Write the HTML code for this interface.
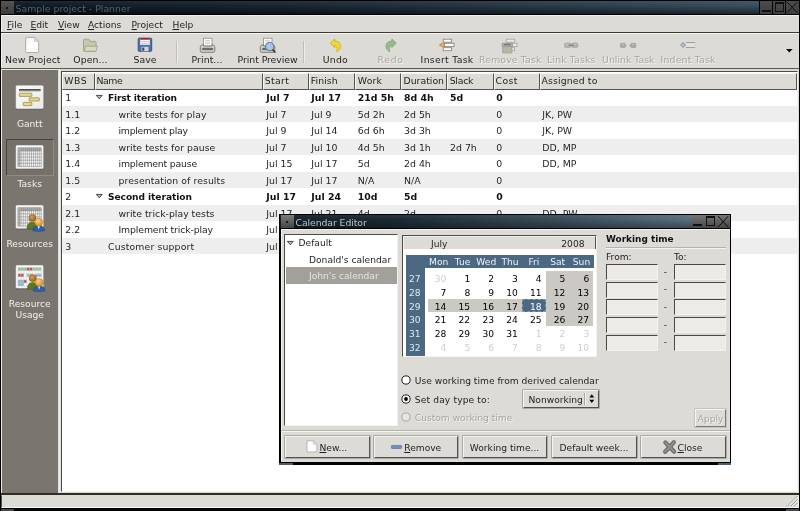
<!DOCTYPE html><html><head><meta charset="utf-8"><title>Sample project - Planner</title><style>
html,body{margin:0;padding:0;background:#000;}
body{width:800px;height:511px;overflow:hidden;background:#000;position:relative;font-family:"DejaVu Sans","Liberation Sans",sans-serif;font-size:9.15px;color:#1f1f1f;}
div{position:absolute;box-sizing:border-box;}
svg{position:absolute;overflow:visible;}
.t{white-space:nowrap;line-height:12px;}
.dis{color:#a9a7a2;text-shadow:0.8px 0.8px 0 #f4f3f0;}
.b{font-weight:bold;color:#111;}
u{text-decoration:underline;text-underline-offset:1px;text-decoration-thickness:0.75px;}
.btn{background:#dddbd6;border:1px solid;border-color:#f6f5f3 #55534e #55534e #f6f5f3;box-shadow:0 0 0 0.6px #8a8883;}
.entry{background:#edebe7;border:1.3px solid;border-color:#4a4843 #f3f2ef #f3f2ef #4a4843;}
</style></head><body><div id="root" style="left:0;top:0;width:800px;height:511px;overflow:hidden;will-change:transform;filter:blur(0.38px);">
<div style="left:0px;top:0px;width:800px;height:511px;background:#dddbd6;"></div>
<div style="left:0px;top:0px;width:800px;height:15px;background:#000;"></div>
<div style="left:1px;top:1px;width:798px;height:13px;background:linear-gradient(to bottom,rgba(255,255,255,0.06) 0%,rgba(0,0,0,0) 35%,rgba(0,0,0,0.5) 100%),linear-gradient(to right,#0f1922 0%,#182631 35%,#2c414f 75%,#3d5362 100%);"></div>
<div style="left:1px;top:1px;width:12.5px;height:13px;background:linear-gradient(to bottom,#555,#3c3c3c);"></div>
<div style="left:6.2px;top:6.7px;width:2px;height:2px;background:#000;border-radius:1px;"></div>
<div class="t" style="left:15.6px;top:2.58px;font-size:9.3px;color:#54646f;"><span style="letter-spacing:0.014px;">Sample project - Planner</span></div>
<div style="left:759.4px;top:0px;width:40px;height:15px;background:#000;"></div>
<div style="left:760.0px;top:1px;width:12.4px;height:13px;background:linear-gradient(to bottom,#4c4c4c,#3e3e3e);"></div>
<div style="left:773.1px;top:1px;width:12.4px;height:13px;background:linear-gradient(to bottom,#4c4c4c,#3e3e3e);"></div>
<div style="left:786.2px;top:1px;width:12.4px;height:13px;background:linear-gradient(to bottom,#4c4c4c,#3e3e3e);"></div>
<div style="left:761.8px;top:9.8px;width:9px;height:2.2px;border:0.9px solid #111;background:#2f2f2f;"></div>
<div style="left:774.5px;top:2.2px;width:9.6px;height:9.8px;border:1px solid #111;border-top:2px solid #111;"></div>
<svg style="left:786.2px;top:1px" width="12.4" height="13"><path d="M1.2 1.2 L11.2 11.6 M11.2 1.2 L1.2 11.6" stroke="#0c0c0c" stroke-width="1" fill="none"/></svg>
<div style="left:0px;top:0px;width:1px;height:511px;background:#000;"></div>
<div style="left:799px;top:0px;width:1px;height:511px;background:#000;"></div>
<div style="left:1px;top:15px;width:798px;height:17px;background:#dddbd6;border-top:1px solid #f3f2ef;border-left:1px solid #f3f2ef;"></div>
<div style="left:1px;top:32px;width:798px;height:1px;background:#3c3a36;"></div>
<div class="t" style="left:7px;top:18.93px;font-size:9.15px;"><u>F</u>ile</div>
<div class="t" style="left:30.5px;top:18.93px;font-size:9.15px;"><u>E</u>dit</div>
<div class="t" style="left:58px;top:18.93px;font-size:9.15px;"><u>V</u>iew</div>
<div class="t" style="left:88px;top:18.93px;font-size:9.15px;"><u>A</u>ctions</div>
<div class="t" style="left:131.5px;top:18.93px;font-size:9.15px;"><u>P</u>roject</div>
<div class="t" style="left:172.5px;top:18.93px;font-size:9.15px;"><u>H</u>elp</div>
<div style="left:1px;top:33px;width:798px;height:35px;background:#dddbd6;border-top:1px solid #f6f5f2;border-left:1px solid #f3f2ef;"></div>
<div style="left:1px;top:68px;width:798px;height:1px;background:#5a5853;"></div>
<div class="t" style="left:5.1px;top:53.58px;font-size:9.3px;"><span style="letter-spacing:0.032px;">New Project</span></div>
<div class="t" style="left:73.35px;top:53.58px;font-size:9.3px;"><span style="letter-spacing:0.064px;">Open...</span></div>
<div class="t" style="left:133.6px;top:53.58px;font-size:9.3px;"><span style="letter-spacing:0.018px;">Save</span></div>
<div class="t" style="left:191.6px;top:53.58px;font-size:9.3px;"><span style="letter-spacing:0.079px;">Print...</span></div>
<div class="t" style="left:237.6px;top:53.58px;font-size:9.3px;"><span style="letter-spacing:-0.049px;">Print Preview</span></div>
<div class="t" style="left:322.85px;top:53.58px;font-size:9.3px;"><span style="letter-spacing:0.213px;">Undo</span></div>
<div class="t dis" style="left:377.6px;top:53.58px;font-size:9.3px;"><span style="letter-spacing:0.635px;">Redo</span></div>
<div class="t" style="left:420.6px;top:53.58px;font-size:9.3px;"><span style="letter-spacing:0.292px;">Insert Task</span></div>
<div class="t dis" style="left:479.1px;top:53.58px;font-size:9.3px;"><span style="letter-spacing:0.150px;">Remove Task</span></div>
<div class="t dis" style="left:547.1px;top:53.58px;font-size:9.3px;"><span style="letter-spacing:0.149px;">Link Tasks</span></div>
<div class="t dis" style="left:602.1px;top:53.58px;font-size:9.3px;"><span style="letter-spacing:0.021px;">Unlink Task</span></div>
<div class="t dis" style="left:660.6px;top:53.58px;font-size:9.3px;"><span style="letter-spacing:0.190px;">Indent Task</span></div>
<div style="left:175.6px;top:40.5px;width:1px;height:22px;background:#c0beb9;"></div>
<div style="left:176.6px;top:40.5px;width:1px;height:22px;background:#eeedea;"></div>
<div style="left:303.4px;top:40.5px;width:1px;height:22px;background:#c0beb9;"></div>
<div style="left:304.4px;top:40.5px;width:1px;height:22px;background:#eeedea;"></div>
<svg style="left:786px;top:48.5px" width="7" height="4"><path d="M0 0 L6.6 0 L3.3 3.6 Z" fill="#000"/></svg>
<div style="left:1px;top:69px;width:1.2px;height:424px;background:#e9e8e4;"></div>
<div style="left:2px;top:69px;width:57px;height:1.4px;background:#e6e4e0;"></div>
<div style="left:2.2px;top:70.3px;width:56.3px;height:422.3px;background:#7a766f;"></div>
<div style="left:58.5px;top:69.3px;width:1px;height:423.3px;background:#f1f0ed;"></div>
<div style="left:5.9px;top:138.7px;width:48.2px;height:37.6px;background:#75716a;border:1.2px solid;border-color:#45433f #908c85 #908c85 #45433f;"></div>
<div class="t" style="left:-70.3px;width:200px;text-align:center;top:118.33px;font-size:9.15px;color:#f2f1ee;">Gantt</div>
<div class="t" style="left:-70.3px;width:200px;text-align:center;top:178.03px;font-size:9.15px;color:#f2f1ee;">Tasks</div>
<div class="t" style="left:-70.3px;width:200px;text-align:center;top:237.53px;font-size:9.15px;color:#f2f1ee;">Resources</div>
<div class="t" style="left:-70.3px;width:200px;text-align:center;top:297.93px;font-size:9.15px;color:#f2f1ee;">Resource</div>
<div class="t" style="left:-70.3px;width:200px;text-align:center;top:308.93px;font-size:9.15px;color:#f2f1ee;">Usage</div>
<div style="left:61px;top:70.8px;width:737.3px;height:421.7px;background:#fff;border:1px solid;border-color:#4d4b46 #f3f2ef #f3f2ef #4d4b46;"></div>
<div style="left:62px;top:72.5px;width:735px;height:17.3px;background:#dddbd6;border-bottom:1px solid #55534e;"></div>
<div style="left:62px;top:72.5px;width:32.8px;height:17.2px;background:#dddbd6;border:1px solid;border-color:#f6f5f2 #55534e #55534e #f6f5f2;"></div>
<div class="t" style="left:64.3px;top:75.38px;font-size:9.3px;"><span style="letter-spacing:0.562px;">WBS</span></div>
<div style="left:94.8px;top:72.5px;width:168.2px;height:17.2px;background:#dddbd6;border:1px solid;border-color:#f6f5f2 #55534e #55534e #f6f5f2;"></div>
<div class="t" style="left:96.4px;top:75.38px;font-size:9.3px;"><span style="letter-spacing:-0.384px;">Name</span></div>
<div style="left:263px;top:72.5px;width:45.80000000000001px;height:17.2px;background:#dddbd6;border:1px solid;border-color:#f6f5f2 #55534e #55534e #f6f5f2;"></div>
<div class="t" style="left:264.8px;top:75.38px;font-size:9.3px;"><span style="letter-spacing:0.356px;">Start</span></div>
<div style="left:308.8px;top:72.5px;width:46.0px;height:17.2px;background:#dddbd6;border:1px solid;border-color:#f6f5f2 #55534e #55534e #f6f5f2;"></div>
<div class="t" style="left:310.8px;top:75.38px;font-size:9.3px;"><span style="letter-spacing:0.072px;">Finish</span></div>
<div style="left:354.8px;top:72.5px;width:46.39999999999998px;height:17.2px;background:#dddbd6;border:1px solid;border-color:#f6f5f2 #55534e #55534e #f6f5f2;"></div>
<div class="t" style="left:357.8px;top:75.38px;font-size:9.3px;"><span style="letter-spacing:0.188px;">Work</span></div>
<div style="left:401.2px;top:72.5px;width:45.60000000000002px;height:17.2px;background:#dddbd6;border:1px solid;border-color:#f6f5f2 #55534e #55534e #f6f5f2;"></div>
<div class="t" style="left:403.5px;top:75.38px;font-size:9.3px;"><span style="letter-spacing:0.014px;">Duration</span></div>
<div style="left:446.8px;top:72.5px;width:46.80000000000001px;height:17.2px;background:#dddbd6;border:1px solid;border-color:#f6f5f2 #55534e #55534e #f6f5f2;"></div>
<div class="t" style="left:449.7px;top:75.38px;font-size:9.3px;"><span style="letter-spacing:-0.237px;">Slack</span></div>
<div style="left:493.6px;top:72.5px;width:46.0px;height:17.2px;background:#dddbd6;border:1px solid;border-color:#f6f5f2 #55534e #55534e #f6f5f2;"></div>
<div class="t" style="left:495.6px;top:75.38px;font-size:9.3px;"><span style="letter-spacing:0.357px;">Cost</span></div>
<div style="left:539.6px;top:72.5px;width:257.4px;height:17.2px;background:#dddbd6;border:1px solid;border-color:#f6f5f2 #55534e #55534e #f6f5f2;"></div>
<div class="t" style="left:541.6px;top:75.38px;font-size:9.3px;"><span style="letter-spacing:0.141px;">Assigned to</span></div>
<div class="t" style="left:65.3px;top:92.15px;font-size:9.4px;">1</div>
<div class="t b" style="left:108px;top:92.25px;font-size:9.1px;"><span style="letter-spacing:-0.152px;">First iteration</span></div>
<svg style="left:96px;top:95.35px" width="7" height="5"><path d="M0.4 0.4 L6.2 0.4 L3.3 3.8 Z" fill="#c4c4c4" stroke="#333" stroke-width="0.9"/></svg>
<div class="t b" style="left:266.3px;top:92.16px;font-size:9.35px;">Jul 7</div>
<div class="t b" style="left:311.3px;top:92.16px;font-size:9.35px;">Jul 17</div>
<div class="t b" style="left:357.8px;top:92.16px;font-size:9.35px;">21d 5h</div>
<div class="t b" style="left:404px;top:92.16px;font-size:9.35px;">8d 4h</div>
<div class="t b" style="left:450px;top:92.16px;font-size:9.35px;">5d</div>
<div class="t b" style="left:496.3px;top:92.16px;font-size:9.35px;">0</div>
<div style="left:62px;top:106.0px;width:735.5px;height:16.45px;background:#eeeeee;"></div>
<div class="t" style="left:65.3px;top:108.67px;font-size:9.4px;">1.1</div>
<div class="t" style="left:118.5px;top:108.70px;font-size:9.3px;"><span style="letter-spacing:0.025px;">write tests for play</span></div>
<div class="t" style="left:266.3px;top:108.67px;font-size:9.4px;">Jul 7</div>
<div class="t" style="left:311.3px;top:108.67px;font-size:9.4px;">Jul 9</div>
<div class="t" style="left:357.8px;top:108.67px;font-size:9.4px;">5d 2h</div>
<div class="t" style="left:404px;top:108.67px;font-size:9.4px;">2d 5h</div>
<div class="t" style="left:496.3px;top:108.67px;font-size:9.4px;">0</div>
<div class="t" style="left:542.3px;top:108.67px;font-size:9.4px;">JK, PW</div>
<div class="t" style="left:65.3px;top:125.19px;font-size:9.4px;">1.2</div>
<div class="t" style="left:118.5px;top:125.22px;font-size:9.3px;"><span style="letter-spacing:-0.250px;">implement play</span></div>
<div class="t" style="left:266.3px;top:125.19px;font-size:9.4px;">Jul 9</div>
<div class="t" style="left:311.3px;top:125.19px;font-size:9.4px;">Jul 14</div>
<div class="t" style="left:357.8px;top:125.19px;font-size:9.4px;">6d 6h</div>
<div class="t" style="left:404px;top:125.19px;font-size:9.4px;">3d 3h</div>
<div class="t" style="left:496.3px;top:125.19px;font-size:9.4px;">0</div>
<div class="t" style="left:542.3px;top:125.19px;font-size:9.4px;">JK, PW</div>
<div style="left:62px;top:138.89999999999998px;width:735.5px;height:16.45px;background:#eeeeee;"></div>
<div class="t" style="left:65.3px;top:141.71px;font-size:9.4px;">1.3</div>
<div class="t" style="left:118.5px;top:141.74px;font-size:9.3px;"><span style="letter-spacing:0.053px;">write tests for pause</span></div>
<div class="t" style="left:266.3px;top:141.71px;font-size:9.4px;">Jul 7</div>
<div class="t" style="left:311.3px;top:141.71px;font-size:9.4px;">Jul 10</div>
<div class="t" style="left:357.8px;top:141.71px;font-size:9.4px;">4d 5h</div>
<div class="t" style="left:404px;top:141.71px;font-size:9.4px;">3d 1h</div>
<div class="t" style="left:450px;top:141.71px;font-size:9.4px;">2d 7h</div>
<div class="t" style="left:496.3px;top:141.71px;font-size:9.4px;">0</div>
<div class="t" style="left:542.3px;top:141.71px;font-size:9.4px;">DD, MP</div>
<div class="t" style="left:65.3px;top:158.23px;font-size:9.4px;">1.4</div>
<div class="t" style="left:118.5px;top:158.26px;font-size:9.3px;"><span style="letter-spacing:-0.178px;">implement pause</span></div>
<div class="t" style="left:266.3px;top:158.23px;font-size:9.4px;">Jul 15</div>
<div class="t" style="left:311.3px;top:158.23px;font-size:9.4px;">Jul 17</div>
<div class="t" style="left:357.8px;top:158.23px;font-size:9.4px;">5d</div>
<div class="t" style="left:404px;top:158.23px;font-size:9.4px;">2d 4h</div>
<div class="t" style="left:496.3px;top:158.23px;font-size:9.4px;">0</div>
<div class="t" style="left:542.3px;top:158.23px;font-size:9.4px;">DD, MP</div>
<div style="left:62px;top:171.8px;width:735.5px;height:16.45px;background:#eeeeee;"></div>
<div class="t" style="left:65.3px;top:174.75px;font-size:9.4px;">1.5</div>
<div class="t" style="left:118.5px;top:174.78px;font-size:9.3px;"><span style="letter-spacing:0.079px;">presentation of results</span></div>
<div class="t" style="left:266.3px;top:174.75px;font-size:9.4px;">Jul 17</div>
<div class="t" style="left:311.3px;top:174.75px;font-size:9.4px;">Jul 17</div>
<div class="t" style="left:357.8px;top:174.75px;font-size:9.4px;">N/A</div>
<div class="t" style="left:404px;top:174.75px;font-size:9.4px;">N/A</div>
<div class="t" style="left:496.3px;top:174.75px;font-size:9.4px;">0</div>
<div class="t" style="left:65.3px;top:191.27px;font-size:9.4px;">2</div>
<div class="t b" style="left:108px;top:191.37px;font-size:9.1px;"><span style="letter-spacing:-0.066px;">Second iteration</span></div>
<svg style="left:96px;top:194.05px" width="7" height="5"><path d="M0.4 0.4 L6.2 0.4 L3.3 3.8 Z" fill="#c4c4c4" stroke="#333" stroke-width="0.9"/></svg>
<div class="t b" style="left:266.3px;top:191.28px;font-size:9.35px;">Jul 17</div>
<div class="t b" style="left:311.3px;top:191.28px;font-size:9.35px;">Jul 24</div>
<div class="t b" style="left:357.8px;top:191.28px;font-size:9.35px;">10d</div>
<div class="t b" style="left:404px;top:191.28px;font-size:9.35px;">5d</div>
<div class="t b" style="left:496.3px;top:191.28px;font-size:9.35px;">0</div>
<div style="left:62px;top:204.7px;width:735.5px;height:16.45px;background:#eeeeee;"></div>
<div class="t" style="left:65.3px;top:207.79px;font-size:9.4px;">2.1</div>
<div class="t" style="left:118.5px;top:207.82px;font-size:9.3px;"><span style="letter-spacing:0.015px;">write trick-play tests</span></div>
<div class="t" style="left:266.3px;top:207.79px;font-size:9.4px;">Jul 17</div>
<div class="t" style="left:311.3px;top:207.79px;font-size:9.4px;">Jul 21</div>
<div class="t" style="left:357.8px;top:207.79px;font-size:9.4px;">4d</div>
<div class="t" style="left:404px;top:207.79px;font-size:9.4px;">2d</div>
<div class="t" style="left:496.3px;top:207.79px;font-size:9.4px;">0</div>
<div class="t" style="left:542.3px;top:207.79px;font-size:9.4px;">DD, PW</div>
<div class="t" style="left:65.3px;top:224.31px;font-size:9.4px;">2.2</div>
<div class="t" style="left:118.5px;top:224.34px;font-size:9.3px;"><span style="letter-spacing:-0.118px;">Implement trick-play</span></div>
<div class="t" style="left:266.3px;top:224.31px;font-size:9.4px;">Jul 17</div>
<div class="t" style="left:311.3px;top:224.31px;font-size:9.4px;">Jul 24</div>
<div class="t" style="left:357.8px;top:224.31px;font-size:9.4px;">6d</div>
<div class="t" style="left:404px;top:224.31px;font-size:9.4px;">3d</div>
<div class="t" style="left:496.3px;top:224.31px;font-size:9.4px;">0</div>
<div style="left:62px;top:237.59999999999997px;width:735.5px;height:16.45px;background:#eeeeee;"></div>
<div class="t" style="left:65.3px;top:240.83px;font-size:9.4px;">3</div>
<div class="t" style="left:108px;top:240.86px;font-size:9.3px;"><span style="letter-spacing:0.155px;">Customer support</span></div>
<div class="t" style="left:266.3px;top:240.83px;font-size:9.4px;">Jul 17</div>
<div class="t" style="left:311.3px;top:240.83px;font-size:9.4px;">Jul 24</div>
<div class="t" style="left:496.3px;top:240.83px;font-size:9.4px;">0</div>
<div style="left:1px;top:492.6px;width:798px;height:1px;background:#3b3935;"></div>
<div style="left:1px;top:493.2px;width:798px;height:1.4px;background:#2f2d2a;"></div>
<div style="left:1px;top:494.6px;width:797.6px;height:13.2px;background:#dddbd6;border:1px solid;border-color:#dddbd6 #f6f5f2 #f6f5f2 #55534e;"></div>
<div style="left:0px;top:507.8px;width:800px;height:3.2px;background:#000;"></div>
<div style="left:1px;top:509px;width:13px;height:1.6px;background:#474849;"></div>
<div style="left:786px;top:509px;width:13px;height:1.6px;background:#474849;"></div>
<svg style="left:786px;top:495px" width="12" height="12"><path d="M11.5 1 L1 11.5 M11.5 4.5 L4.5 11.5 M11.5 8 L8 11.5" stroke="#9a9893" stroke-width="1" fill="none"/><path d="M11.5 2 L2 11.5 M11.5 5.5 L5.5 11.5 M11.5 9 L9 11.5" stroke="#f8f7f5" stroke-width="0.8" fill="none"/></svg>
<div style="left:279.1px;top:213.7px;width:452.1px;height:251.60000000000002px;background:#000;"></div>
<div style="left:280.5px;top:229.0px;width:449.5px;height:233.20000000000002px;background:#dddbd6;border-top:1px solid #f3f2ef;border-left:1px solid #f3f2ef;"></div>
<div style="left:279.1px;top:213.7px;width:452.1px;height:15.5px;background:#000;"></div>
<div style="left:280.1px;top:214.7px;width:450.1px;height:13.5px;background:linear-gradient(to bottom,rgba(255,255,255,0.05) 0%,rgba(0,0,0,0) 30%,rgba(0,0,0,0.33) 100%),linear-gradient(to right,#15212b 0%,#1c2b36 25%,#3a4f5d 62%,#627a8a 100%);"></div>
<div style="left:280.70000000000005px;top:214.7px;width:13.1px;height:13.5px;background:linear-gradient(to bottom,#7c7c7c,#444);"></div>
<div style="left:286.1px;top:220.64999999999998px;width:2px;height:2px;background:#000;border-radius:1px;"></div>
<div class="t" style="left:295.50000000000006px;top:216.78px;font-size:9.3px;color:#b9c3ca;"><span style="letter-spacing:-0.072px;">Calendar Editor</span></div>
<div style="left:690.6px;top:213.7px;width:40px;height:15.5px;background:#000;"></div>
<div style="left:691.2px;top:214.7px;width:12.4px;height:13.5px;background:linear-gradient(to bottom,#757575,#474747);"></div>
<div style="left:704.3000000000001px;top:214.7px;width:12.4px;height:13.5px;background:linear-gradient(to bottom,#757575,#474747);"></div>
<div style="left:717.4000000000001px;top:214.7px;width:12.4px;height:13.5px;background:linear-gradient(to bottom,#757575,#474747);"></div>
<div style="left:693.0px;top:224.0px;width:9px;height:2.2px;border:0.9px solid #111;background:#2f2f2f;"></div>
<div style="left:705.7px;top:215.89999999999998px;width:9.6px;height:10.3px;border:1px solid #111;border-top:2px solid #111;"></div>
<svg style="left:717.4000000000001px;top:214.7px" width="12.4" height="13.5"><path d="M1.2 1.2 L11.2 12.1 M11.2 1.2 L1.2 12.1" stroke="#0c0c0c" stroke-width="1" fill="none"/></svg>
<div style="left:279.1px;top:462.90000000000003px;width:13.5px;height:2.4px;background:#4a6070;"></div>
<div style="left:717.7px;top:462.90000000000003px;width:13.5px;height:2.4px;background:#4a6070;"></div>
<div style="left:284.2px;top:233.6px;width:113.6px;height:192.4px;background:#fff;border:1.2px solid;border-color:#4d4b46 #f3f2ef #f3f2ef #4d4b46;"></div>
<div style="left:285.5px;top:267.4px;width:111.5px;height:16.2px;background:#a3a09a;"></div>
<svg style="left:287px;top:240.6px" width="7" height="5"><path d="M0.4 0.4 L6.2 0.4 L3.3 3.8 Z" fill="#c4c4c4" stroke="#333" stroke-width="0.9"/></svg>
<div class="t" style="left:298.5px;top:237.23px;font-size:9.15px;">Default</div>
<div class="t" style="left:309px;top:253.93px;font-size:9.15px;">Donald's calendar</div>
<div class="t" style="left:309px;top:270.43px;font-size:9.15px;color:#e6e4e0;">John's calendar</div>
<div style="left:401.6px;top:234.8px;width:195.6px;height:122px;background:#fff;border:1.2px solid;border-color:#4d4b46 #f3f2ef #f3f2ef #4d4b46;"></div>
<div style="left:402.8px;top:236px;width:193px;height:13.2px;background:#dddbd6;border-top:1px solid #f3f2ef;border-left:1px solid #f3f2ef;border-right:1.3px solid #55534e;"></div>
<div class="t" style="left:431px;top:238.43px;font-size:9.15px;">July</div>
<div class="t" style="left:561.3px;top:238.43px;font-size:9.15px;">2008</div>
<div style="left:406px;top:254.8px;width:187.5px;height:13.6px;background:#4b6983;"></div>
<div style="left:406px;top:254.8px;width:18.8px;height:101px;background:#4b6983;"></div>
<div class="t" style="left:338.7px;width:200px;text-align:center;top:256.13px;font-size:9.15px;color:#eef2f5;">Mon</div>
<div class="t" style="left:362.5px;width:200px;text-align:center;top:256.13px;font-size:9.15px;color:#eef2f5;">Tue</div>
<div class="t" style="left:386.3px;width:200px;text-align:center;top:256.13px;font-size:9.15px;color:#eef2f5;">Wed</div>
<div class="t" style="left:410.1px;width:200px;text-align:center;top:256.13px;font-size:9.15px;color:#eef2f5;">Thu</div>
<div class="t" style="left:433.9px;width:200px;text-align:center;top:256.13px;font-size:9.15px;color:#eef2f5;">Fri</div>
<div class="t" style="left:457.69999999999993px;width:200px;text-align:center;top:256.13px;font-size:9.15px;color:#eef2f5;">Sat</div>
<div class="t" style="left:481.5px;width:200px;text-align:center;top:256.13px;font-size:9.15px;color:#eef2f5;">Sun</div>
<div style="left:546.2px;top:271.3px;width:47.3px;height:54.8px;background:#cbc9c3;"></div>
<div style="left:428px;top:298.7px;width:94.5px;height:13.7px;background:#cbc9c3;"></div>
<div style="left:522.3px;top:298.7px;width:23.7px;height:13.7px;background:#4b6983;border:1px dashed rgba(255,255,255,0.32);"></div>
<div class="t" style="left:220.7px;width:200px;text-align:right;top:273.33px;font-size:9.15px;color:#e2e8ee;">27</div>
<div class="t" style="left:246.40000000000003px;width:200px;text-align:right;top:273.33px;font-size:9.15px;color:#d0cecb;">30</div>
<div class="t" style="left:270.20000000000005px;width:200px;text-align:right;top:273.33px;font-size:9.15px;color:#000;">1</div>
<div class="t" style="left:294.00000000000006px;width:200px;text-align:right;top:273.33px;font-size:9.15px;color:#000;">2</div>
<div class="t" style="left:317.79999999999995px;width:200px;text-align:right;top:273.33px;font-size:9.15px;color:#000;">3</div>
<div class="t" style="left:341.5999999999999px;width:200px;text-align:right;top:273.33px;font-size:9.15px;color:#000;">4</div>
<div class="t" style="left:365.4px;width:200px;text-align:right;top:273.33px;font-size:9.15px;color:#000;">5</div>
<div class="t" style="left:389.19999999999993px;width:200px;text-align:right;top:273.33px;font-size:9.15px;color:#000;">6</div>
<div class="t" style="left:220.7px;width:200px;text-align:right;top:287.03px;font-size:9.15px;color:#e2e8ee;">28</div>
<div class="t" style="left:246.40000000000003px;width:200px;text-align:right;top:287.03px;font-size:9.15px;color:#000;">7</div>
<div class="t" style="left:270.20000000000005px;width:200px;text-align:right;top:287.03px;font-size:9.15px;color:#000;">8</div>
<div class="t" style="left:294.00000000000006px;width:200px;text-align:right;top:287.03px;font-size:9.15px;color:#000;">9</div>
<div class="t" style="left:317.79999999999995px;width:200px;text-align:right;top:287.03px;font-size:9.15px;color:#000;">10</div>
<div class="t" style="left:341.5999999999999px;width:200px;text-align:right;top:287.03px;font-size:9.15px;color:#000;">11</div>
<div class="t" style="left:365.4px;width:200px;text-align:right;top:287.03px;font-size:9.15px;color:#000;">12</div>
<div class="t" style="left:389.19999999999993px;width:200px;text-align:right;top:287.03px;font-size:9.15px;color:#000;">13</div>
<div class="t" style="left:220.7px;width:200px;text-align:right;top:300.73px;font-size:9.15px;color:#e2e8ee;">29</div>
<div class="t" style="left:246.40000000000003px;width:200px;text-align:right;top:300.73px;font-size:9.15px;color:#000;">14</div>
<div class="t" style="left:270.20000000000005px;width:200px;text-align:right;top:300.73px;font-size:9.15px;color:#000;">15</div>
<div class="t" style="left:294.00000000000006px;width:200px;text-align:right;top:300.73px;font-size:9.15px;color:#000;">16</div>
<div class="t" style="left:317.79999999999995px;width:200px;text-align:right;top:300.73px;font-size:9.15px;color:#000;">17</div>
<div class="t" style="left:341.5999999999999px;width:200px;text-align:right;top:300.73px;font-size:9.15px;color:#fff;">18</div>
<div class="t" style="left:365.4px;width:200px;text-align:right;top:300.73px;font-size:9.15px;color:#000;">19</div>
<div class="t" style="left:389.19999999999993px;width:200px;text-align:right;top:300.73px;font-size:9.15px;color:#000;">20</div>
<div class="t" style="left:220.7px;width:200px;text-align:right;top:314.43px;font-size:9.15px;color:#e2e8ee;">30</div>
<div class="t" style="left:246.40000000000003px;width:200px;text-align:right;top:314.43px;font-size:9.15px;color:#000;">21</div>
<div class="t" style="left:270.20000000000005px;width:200px;text-align:right;top:314.43px;font-size:9.15px;color:#000;">22</div>
<div class="t" style="left:294.00000000000006px;width:200px;text-align:right;top:314.43px;font-size:9.15px;color:#000;">23</div>
<div class="t" style="left:317.79999999999995px;width:200px;text-align:right;top:314.43px;font-size:9.15px;color:#000;">24</div>
<div class="t" style="left:341.5999999999999px;width:200px;text-align:right;top:314.43px;font-size:9.15px;color:#000;">25</div>
<div class="t" style="left:365.4px;width:200px;text-align:right;top:314.43px;font-size:9.15px;color:#000;">26</div>
<div class="t" style="left:389.19999999999993px;width:200px;text-align:right;top:314.43px;font-size:9.15px;color:#000;">27</div>
<div class="t" style="left:220.7px;width:200px;text-align:right;top:328.13px;font-size:9.15px;color:#e2e8ee;">31</div>
<div class="t" style="left:246.40000000000003px;width:200px;text-align:right;top:328.13px;font-size:9.15px;color:#000;">28</div>
<div class="t" style="left:270.20000000000005px;width:200px;text-align:right;top:328.13px;font-size:9.15px;color:#000;">29</div>
<div class="t" style="left:294.00000000000006px;width:200px;text-align:right;top:328.13px;font-size:9.15px;color:#000;">30</div>
<div class="t" style="left:317.79999999999995px;width:200px;text-align:right;top:328.13px;font-size:9.15px;color:#000;">31</div>
<div class="t" style="left:341.5999999999999px;width:200px;text-align:right;top:328.13px;font-size:9.15px;color:#d0cecb;">1</div>
<div class="t" style="left:365.4px;width:200px;text-align:right;top:328.13px;font-size:9.15px;color:#d0cecb;">2</div>
<div class="t" style="left:389.19999999999993px;width:200px;text-align:right;top:328.13px;font-size:9.15px;color:#d0cecb;">3</div>
<div class="t" style="left:220.7px;width:200px;text-align:right;top:341.83px;font-size:9.15px;color:#e2e8ee;">32</div>
<div class="t" style="left:246.40000000000003px;width:200px;text-align:right;top:341.83px;font-size:9.15px;color:#d0cecb;">4</div>
<div class="t" style="left:270.20000000000005px;width:200px;text-align:right;top:341.83px;font-size:9.15px;color:#d0cecb;">5</div>
<div class="t" style="left:294.00000000000006px;width:200px;text-align:right;top:341.83px;font-size:9.15px;color:#d0cecb;">6</div>
<div class="t" style="left:317.79999999999995px;width:200px;text-align:right;top:341.83px;font-size:9.15px;color:#d0cecb;">7</div>
<div class="t" style="left:341.5999999999999px;width:200px;text-align:right;top:341.83px;font-size:9.15px;color:#d0cecb;">8</div>
<div class="t" style="left:365.4px;width:200px;text-align:right;top:341.83px;font-size:9.15px;color:#d0cecb;">9</div>
<div class="t" style="left:389.19999999999993px;width:200px;text-align:right;top:341.83px;font-size:9.15px;color:#d0cecb;">10</div>
<div class="t b" style="left:606px;top:232.90px;font-size:8.95px;">Working time</div>
<div style="left:606px;top:246.6px;width:120px;height:1px;background:#b5b3ae;"></div>
<div style="left:606px;top:247.6px;width:120px;height:0.8px;background:#f3f2ef;"></div>
<div class="t" style="left:606px;top:251.23px;font-size:9.15px;">From:</div>
<div class="t" style="left:674px;top:251.23px;font-size:9.15px;">To:</div>
<div class="entry" style="left:606px;top:264.0px;width:52.3px;height:16.2px;"></div>
<div class="entry" style="left:674px;top:264.0px;width:52.3px;height:16.2px;"></div>
<div class="t" style="left:663.8px;top:265.83px;font-size:9.15px;">-</div>
<div class="entry" style="left:606px;top:281.65px;width:52.3px;height:16.2px;"></div>
<div class="entry" style="left:674px;top:281.65px;width:52.3px;height:16.2px;"></div>
<div class="t" style="left:663.8px;top:283.48px;font-size:9.15px;">-</div>
<div class="entry" style="left:606px;top:299.3px;width:52.3px;height:16.2px;"></div>
<div class="entry" style="left:674px;top:299.3px;width:52.3px;height:16.2px;"></div>
<div class="t" style="left:663.8px;top:301.13px;font-size:9.15px;">-</div>
<div class="entry" style="left:606px;top:316.95px;width:52.3px;height:16.2px;"></div>
<div class="entry" style="left:674px;top:316.95px;width:52.3px;height:16.2px;"></div>
<div class="t" style="left:663.8px;top:318.78px;font-size:9.15px;">-</div>
<div class="entry" style="left:606px;top:334.6px;width:52.3px;height:16.2px;"></div>
<div class="entry" style="left:674px;top:334.6px;width:52.3px;height:16.2px;"></div>
<div class="t" style="left:663.8px;top:336.43px;font-size:9.15px;">-</div>
<svg style="left:401px;top:375.2px" width="10" height="10"><circle cx="5" cy="5" r="4.1" fill="#fff" stroke="#1c1c1c" stroke-width="1"/></svg>
<svg style="left:401px;top:393.6px" width="10" height="10"><circle cx="5" cy="5" r="4.1" fill="#fff" stroke="#1c1c1c" stroke-width="1"/><circle cx="5" cy="5" r="1.9" fill="#000"/></svg>
<svg style="left:401px;top:412.2px" width="10" height="10"><circle cx="5" cy="5" r="4.1" fill="#e8e6e2" stroke="#a9a7a2" stroke-width="1"/></svg>
<div class="t" style="left:414.8px;top:374.83px;font-size:9.15px;"><span style="letter-spacing:0.003px;">Use working time from derived calendar</span></div>
<div class="t" style="left:414.8px;top:393.53px;font-size:9.15px;"><span style="letter-spacing:0.132px;">Set day type to:</span></div>
<div class="t dis" style="left:414.8px;top:412.13px;font-size:9.15px;">Custom working time</div>
<div class="btn" style="left:522.8px;top:389.5px;width:75.8px;height:18px;"></div>
<div class="t" style="left:528.5px;top:393.53px;font-size:9.15px;">Nonworking</div>
<div style="left:584.3px;top:392.5px;width:1px;height:12px;background:#a9a7a2;"></div>
<div style="left:585.3px;top:392.5px;width:1px;height:12px;background:#f5f4f1;"></div>
<svg style="left:589px;top:394px" width="6" height="10"><path d="M0.3 3.6 L5.3 3.6 L2.8 0.3 Z M0.3 5.8 L5.3 5.8 L2.8 9.1 Z" fill="#000"/></svg>
<div class="btn" style="left:694.5px;top:409.4px;width:31.7px;height:17.8px;border-color:#f6f5f3 #7d7b76 #7d7b76 #f6f5f3;box-shadow:0 0 0 0.6px #b5b3ae;"></div>
<div class="t dis" style="left:610.5px;width:200px;text-align:center;top:412.83px;font-size:9.15px;">Apply</div>
<div style="left:281px;top:429.6px;width:449px;height:1px;background:#b5b3ae;"></div>
<div style="left:281px;top:430.6px;width:449px;height:1px;background:#f6f5f2;"></div>
<div class="btn" style="left:284.6px;top:436.4px;width:85.0px;height:21.3px;"></div>
<div class="btn" style="left:374px;top:436.4px;width:84px;height:21.3px;"></div>
<div class="btn" style="left:463px;top:436.4px;width:84px;height:21.3px;"></div>
<div class="btn" style="left:552px;top:436.4px;width:85px;height:21.3px;"></div>
<div class="btn" style="left:641.3px;top:436.4px;width:84.70000000000005px;height:21.3px;"></div>
<div class="t" style="left:319.5px;top:442.33px;font-size:9.15px;"><u>N</u>ew...</div>
<div class="t" style="left:404.2px;top:442.33px;font-size:9.15px;"><u>R</u>emove</div>
<div class="t" style="left:404.5px;width:200px;text-align:center;top:442.33px;font-size:9.15px;">Working time...</div>
<div class="t" style="left:494px;width:200px;text-align:center;top:442.33px;font-size:9.15px;">Default week...</div>
<div class="t" style="left:677.5px;top:442.33px;font-size:9.15px;"><u>C</u>lose</div>
<svg style="left:0;top:0" width="800" height="511" viewBox="0 0 800 511"><defs><linearGradient id="gpage" x1="0" y1="0" x2="1" y2="1"><stop offset="0" stop-color="#f2f2f2"/><stop offset="0.5" stop-color="#ffffff"/><stop offset="1" stop-color="#f6f6f6"/></linearGradient><linearGradient id="gshadow" x1="0" y1="0" x2="0" y2="1"><stop offset="0" stop-color="#2a2824" stop-opacity="0.75"/><stop offset="1" stop-color="#2a2824" stop-opacity="0"/></linearGradient><linearGradient id="gsheet" x1="0" y1="0" x2="1" y2="1"><stop offset="0" stop-color="#fbfbfa"/><stop offset="1" stop-color="#e9e9e7"/></linearGradient><radialGradient id="ghead1" cx="0.4" cy="0.35" r="0.7"><stop offset="0" stop-color="#d9a04a"/><stop offset="1" stop-color="#8f5e16"/></radialGradient><radialGradient id="ghead2" cx="0.4" cy="0.35" r="0.7"><stop offset="0" stop-color="#fbd38a"/><stop offset="1" stop-color="#d98a1c"/></radialGradient></defs><path d="M26.6 37.4 L34.6 37.4 L38.7 41.5 L38.7 51.6 Q38.7 52.5 37.8 52.5 L26.6 52.5 Q25.7 52.5 25.7 51.6 L25.7 38.3 Q25.7 37.4 26.6 37.4 Z" fill="url(#gpage)" stroke="#a5a5a3" stroke-width="0.9"/><path d="M34.6 37.6 L34.6 41.4 L38.5 41.4 Z" fill="#e4e4e2" stroke="#b0b0ae" stroke-width="0.6"/><path d="M83.5 40 Q83.5 39.2 84.3 39.2 L88.4 39.2 Q89 39.2 89.3 39.8 L90 41.4 L95.3 41.4 Q96.1 41.4 96.1 42.2 L96.1 50.6 Q96.1 51.4 95.3 51.4 L84.3 51.4 Q83.5 51.4 83.5 50.6 Z" fill="#c3c7ab" stroke="#9ca087" stroke-width="0.9"/><path d="M85.6 46.2 L97.5 46.2 L95.9 51.3 L84.2 51.3 Z" fill="#d5d9bf" stroke="#9ca087" stroke-width="0.8" stroke-linejoin="round"/><rect x="138.2" y="38.1" width="13.5" height="13.3" rx="1.2" fill="#4f74ad" stroke="#2d4d82" stroke-width="0.9"/><rect x="140.2" y="38.4" width="9.6" height="6.4" fill="#fbfbfb" stroke="#c9d3e6" stroke-width="0.4"/><rect x="140.2" y="38.1" width="9.6" height="1.6" fill="#b31414"/><path d="M141 41.6 H149 M141 43.3 H149" stroke="#b9b9b9" stroke-width="0.7"/><rect x="141.3" y="46.8" width="7.4" height="4.6" fill="#d6d6d6" stroke="#6d7888" stroke-width="0.4"/><rect x="142.3" y="47.6" width="2" height="3.2" fill="#3a4a66"/><rect x="203.4" y="38.2" width="8.6" height="8" fill="#fdfdfd" stroke="#8d8d8b" stroke-width="0.8"/><path d="M205.2 40.4 H210.2 M205.2 42 H210.2 M205.2 43.6 H210.2" stroke="#c9c9c9" stroke-width="0.9"/><path d="M202.4 44.8 L203.4 44.8 L203.4 46 L212 46 L212 44.8 L212.8 44.8 Q214.8 45.4 214.8 47.4 L214.8 50.6 Q214.8 52.3 213.1 52.3 L201.9 52.3 Q200.3 52.3 200.3 50.6 L200.3 47.4 Q200.3 45.4 202.4 44.8 Z" fill="#d6d6d4" stroke="#6f6f6d" stroke-width="0.9"/><rect x="202.2" y="48" width="10.8" height="2" rx="0.8" fill="#737371" stroke="#555" stroke-width="0.4"/><rect x="263.4" y="38.2" width="8.6" height="8" fill="#fdfdfd" stroke="#8d8d8b" stroke-width="0.8"/><path d="M265.2 40.4 H270.2 M265.2 42 H270.2 M265.2 43.6 H270.2" stroke="#c9c9c9" stroke-width="0.9"/><path d="M262.4 44.8 L263.4 44.8 L263.4 46 L272 46 L272 44.8 L272.8 44.8 Q274.8 45.4 274.8 47.4 L274.8 50.6 Q274.8 52.3 273.1 52.3 L261.9 52.3 Q260.3 52.3 260.3 50.6 L260.3 47.4 Q260.3 45.4 262.4 44.8 Z" fill="#d6d6d4" stroke="#6f6f6d" stroke-width="0.9"/><rect x="262.2" y="48" width="10.8" height="2" rx="0.8" fill="#737371" stroke="#555" stroke-width="0.4"/><path d="M272.4 49.4 L274.8 52" stroke="#33373d" stroke-width="1.8" stroke-linecap="round"/><circle cx="269.7" cy="46.6" r="4.2" fill="#a9c5e8" stroke="#56657a" stroke-width="0.9"/><path d="M330.3 43.1 L334.6 39 L334.6 41.1 C338.5 41 340.8 43.6 340.5 46.6 C340.2 49.3 338.7 51 336.7 51.7 C337.6 49.6 337.5 46.4 334.6 45.6 L334.6 47.6 Z" fill="#f0d92c" stroke="#c2a90e" stroke-width="0.7" stroke-linejoin="round" opacity="1"/><path d="M396.2 43.1 L391.9 39 L391.9 41.1 C388 41 385.7 43.6 386 46.6 C386.3 49.3 387.8 51 389.8 51.7 C388.9 49.6 389 46.4 391.9 45.6 L391.9 47.6 Z" fill="#8db888" stroke="#6c9a68" stroke-width="0.7" stroke-linejoin="round" opacity="0.9"/><rect x="443.2" y="39.2" width="8.4" height="3" fill="#fdfdfd" stroke="#868a86" stroke-width="0.9"/><rect x="444.4" y="43.3" width="9.6" height="3.3" fill="#fdfdfd" stroke="#868a86" stroke-width="0.9"/><rect x="443.2" y="47.7" width="8.4" height="3" fill="#fdfdfd" stroke="#868a86" stroke-width="0.9"/><path d="M439.4 44.9 L442 43.1 L444.4 43.7 L444.4 46.2 L442 46.8 Z" fill="#e8933a" stroke="#c9771e" stroke-width="0.5"/><circle cx="442.8" cy="44.9" r="0.8" fill="#fbd9a8"/><rect x="506.2" y="39.2" width="8.4" height="3" fill="#ecebe8" stroke="#a9aba8" stroke-width="0.9"/><rect x="507.4" y="43.3" width="9.6" height="3.3" fill="#ecebe8" stroke="#a9aba8" stroke-width="0.9"/><rect x="506.2" y="47.7" width="8.4" height="3" fill="#ecebe8" stroke="#a9aba8" stroke-width="0.9"/><rect x="502.6" y="45" width="9.3" height="8" rx="0.6" fill="#b4b8a4" stroke="#9a9e8c" stroke-width="0.7"/><rect x="502" y="43.3" width="10.6" height="3" rx="1" fill="#b9b9b7" stroke="#8a8a88" stroke-width="0.7"/><rect x="503.8" y="44.3" width="7" height="0.9" fill="#5c5c5a"/><rect x="564.5" y="43" width="6.2" height="4.5" rx="1.3" fill="#b4b4b2" stroke="#9d9d9b" stroke-width="0.6"/><rect x="571.7" y="43" width="6.2" height="4.5" rx="1.3" fill="#b0b0ae" stroke="#9d9d9b" stroke-width="0.6"/><path d="M568.6 45.3 H573.8" stroke="#8b8b89" stroke-width="1.5"/><path d="M566 44.4 H568.6 M573.6 44.4 H576.2" stroke="#d0d0ce" stroke-width="0.8"/><path d="M621.4 43.3 L624.8 43.3 L626.2 45.4 L624.8 47.5 L621.4 47.5 Q620.3 47.5 620.3 46.4 L620.3 44.4 Q620.3 43.3 621.4 43.3 Z" fill="#a6a6a4" stroke="#939391" stroke-width="0.5"/><path d="M634.8 43.3 L631.4 43.3 L629.6 45.4 L631.4 47.5 L634.8 47.5 Q635.9 47.5 635.9 46.4 L635.9 44.4 Q635.9 43.3 634.8 43.3 Z" fill="#a6a6a4" stroke="#939391" stroke-width="0.5"/><path d="M621.8 44.6 H624.4 M631.8 44.6 H634.6" stroke="#cfcfcd" stroke-width="0.8"/><rect x="686.2" y="42.6" width="9" height="4.8" fill="#e2e1de"/><path d="M686 42.5 H695.3 M686 47.5 H695.3" stroke="#9a9894" stroke-width="0.9"/><path d="M695 42.4 V47.6" stroke="#cfcdc9" stroke-width="0.6"/><path d="M680.2 45 L683.1 42.1 L686 45 L683.1 47.9 Z" fill="#aab3be" stroke="#939caa" stroke-width="0.6"/><rect x="16" y="107.0" width="27" height="3.5" fill="url(#gshadow)"/><rect x="16.1" y="85.7" width="27" height="22.8" rx="0.9" fill="url(#gsheet)" stroke="#fbfbfa" stroke-width="0.5"/><rect x="19" y="89.3" width="21.6" height="1.4" fill="#0c0c0c"/><rect x="19" y="90.6" width="21.6" height="1.2" fill="#c4c4c2"/><rect x="19.2" y="93.2" width="12.6" height="3.2" rx="0.6" fill="#e4d78e" stroke="#9a8e4a" stroke-width="0.8"/><rect x="29.2" y="97.8" width="10.2" height="3.2" rx="0.6" fill="#e4d78e" stroke="#9a8e4a" stroke-width="0.8"/><rect x="23.2" y="102.4" width="8.6" height="3.2" rx="0.6" fill="#e4d78e" stroke="#9a8e4a" stroke-width="0.8"/><rect x="16" y="167.1" width="27" height="3.5" fill="url(#gshadow)"/><rect x="16.1" y="145.6" width="27" height="23" rx="0.9" fill="url(#gsheet)" stroke="#fbfbfa" stroke-width="0.5"/><rect x="17.9" y="147.79999999999998" width="23.300000000000004" height="18.600000000000023" fill="#fdfdfd"/><rect x="17.9" y="147.79999999999998" width="23.300000000000004" height="3.3" fill="#b2b2b2"/><rect x="17.9" y="147.79999999999998" width="2.6" height="18.600000000000023" fill="#c2c2c2"/><path d="M17.90 147.79999999999998 V166.4 M19.84 147.79999999999998 V166.4 M21.78 147.79999999999998 V166.4 M23.72 147.79999999999998 V166.4 M25.67 147.79999999999998 V166.4 M27.61 147.79999999999998 V166.4 M29.55 147.79999999999998 V166.4 M31.49 147.79999999999998 V166.4 M33.43 147.79999999999998 V166.4 M35.38 147.79999999999998 V166.4 M37.32 147.79999999999998 V166.4 M39.26 147.79999999999998 V166.4 M41.20 147.79999999999998 V166.4 M17.9 147.80 H41.2 M17.9 150.90 H41.2 M17.9 154.00 H41.2 M17.9 157.10 H41.2 M17.9 160.20 H41.2 M17.9 163.30 H41.2 M17.9 166.40 H41.2 " stroke="#808080" stroke-width="0.55" fill="none"/><rect x="16" y="226.8" width="27" height="3.5" fill="url(#gshadow)"/><rect x="16.1" y="205.5" width="27" height="22.8" rx="0.9" fill="url(#gsheet)" stroke="#fbfbfa" stroke-width="0.5"/><rect x="17.9" y="207.7" width="23.300000000000004" height="18.400000000000034" fill="#fdfdfd"/><rect x="17.9" y="207.7" width="23.300000000000004" height="3.3" fill="#b2b2b2"/><rect x="17.9" y="207.7" width="2.6" height="18.400000000000034" fill="#c2c2c2"/><path d="M17.90 207.7 V226.10000000000002 M19.84 207.7 V226.10000000000002 M21.78 207.7 V226.10000000000002 M23.72 207.7 V226.10000000000002 M25.67 207.7 V226.10000000000002 M27.61 207.7 V226.10000000000002 M29.55 207.7 V226.10000000000002 M31.49 207.7 V226.10000000000002 M33.43 207.7 V226.10000000000002 M35.38 207.7 V226.10000000000002 M37.32 207.7 V226.10000000000002 M39.26 207.7 V226.10000000000002 M41.20 207.7 V226.10000000000002 M17.9 207.70 H41.2 M17.9 210.77 H41.2 M17.9 213.83 H41.2 M17.9 216.90 H41.2 M17.9 219.97 H41.2 M17.9 223.03 H41.2 M17.9 226.10 H41.2 " stroke="#808080" stroke-width="0.55" fill="none"/><path d="M27 229 Q26.6 222.6 32.3 222.2 Q37.6 222.6 37.4 229 Z" fill="#5b7a1f" stroke="#425a14" stroke-width="0.5"/><circle cx="32.4" cy="218" r="3.6" fill="url(#ghead1)" stroke="#7a5212" stroke-width="0.4"/><path d="M32.8 230.8 Q32.6 226 38.7 225.6 Q44.8 226 44.6 230.8 Q38.7 232.2 32.8 230.8 Z" fill="#2f61ab" stroke="#1f4682" stroke-width="0.5"/><path d="M37.6 226 L38.7 229.6 L39.8 226 Z" fill="#f4f4f4"/><circle cx="38.7" cy="222.2" r="3.9" fill="url(#ghead2)" stroke="#b8720f" stroke-width="0.4"/><rect x="16" y="286.6" width="27" height="3.5" fill="url(#gshadow)"/><rect x="16.1" y="265.5" width="27" height="22.6" rx="0.9" fill="url(#gsheet)" stroke="#fbfbfa" stroke-width="0.5"/><rect x="18" y="267.6" width="23.2" height="18.4" fill="#fafafa"/><rect x="18.00" y="267.60" width="2.90" height="3.07" fill="#8cc4a0"/><rect x="20.90" y="267.60" width="2.90" height="3.07" fill="#8cc4a0"/><rect x="23.80" y="267.60" width="2.90" height="3.07" fill="#8cc4a0"/><rect x="26.70" y="267.60" width="2.90" height="3.07" fill="#c24a66"/><rect x="29.60" y="267.60" width="2.90" height="3.07" fill="#c24a66"/><rect x="32.50" y="267.60" width="2.90" height="3.07" fill="#8cc4a0"/><rect x="35.40" y="267.60" width="2.90" height="3.07" fill="#8cc4a0"/><rect x="38.30" y="267.60" width="2.90" height="3.07" fill="#8cc4a0"/><rect x="18.00" y="273.73" width="2.90" height="3.07" fill="#c24a66"/><rect x="20.90" y="273.73" width="2.90" height="3.07" fill="#c24a66"/><rect x="26.70" y="273.73" width="2.90" height="3.07" fill="#8cc4a0"/><rect x="29.60" y="273.73" width="2.90" height="3.07" fill="#8cc4a0"/><rect x="35.40" y="273.73" width="2.90" height="3.07" fill="#8aaed4"/><rect x="38.30" y="273.73" width="2.90" height="3.07" fill="#8aaed4"/><rect x="18.00" y="279.87" width="2.90" height="3.07" fill="#8aaed4"/><rect x="20.90" y="279.87" width="2.90" height="3.07" fill="#8aaed4"/><rect x="23.80" y="279.87" width="2.90" height="3.07" fill="#c24a66"/><rect x="18.00" y="282.93" width="2.90" height="3.07" fill="#8aaed4"/><rect x="20.90" y="282.93" width="2.90" height="3.07" fill="#8aaed4"/><path d="M18.00 267.6 V286.0 M20.90 267.6 V286.0 M23.80 267.6 V286.0 M26.70 267.6 V286.0 M29.60 267.6 V286.0 M32.50 267.6 V286.0 M35.40 267.6 V286.0 M38.30 267.6 V286.0 M41.20 267.6 V286.0 M18 267.60 H41.2 M18 270.67 H41.2 M18 273.73 H41.2 M18 276.80 H41.2 M18 279.87 H41.2 M18 282.93 H41.2 M18 286.00 H41.2 " stroke="#c9c9c7" stroke-width="0.45" fill="none"/><path d="M27.4 289.2 Q27.0 282.8 32.699999999999996 282.4 Q38.0 282.8 37.8 289.2 Z" fill="#5b7a1f" stroke="#425a14" stroke-width="0.5"/><circle cx="32.8" cy="278.2" r="3.6" fill="url(#ghead1)" stroke="#7a5212" stroke-width="0.4"/><path d="M33.199999999999996 291.0 Q33.0 286.2 39.1 285.8 Q45.199999999999996 286.2 45.0 291.0 Q39.1 292.4 33.199999999999996 291.0 Z" fill="#2f61ab" stroke="#1f4682" stroke-width="0.5"/><path d="M38.0 286.2 L39.1 289.8 L40.199999999999996 286.2 Z" fill="#f4f4f4"/><circle cx="39.1" cy="282.4" r="3.9" fill="url(#ghead2)" stroke="#b8720f" stroke-width="0.4"/><path d="M307 440.8 L313.4 440.8 L316.9 444.3 L316.9 452 L307 452 Z" fill="#fdfdfd" stroke="#a9a9a7" stroke-width="0.8" stroke-linejoin="round"/><path d="M313.4 441 L313.4 444.2 L316.7 444.2 Z" fill="#e2e2e0" stroke="#b4b4b2" stroke-width="0.5"/><rect x="391.4" y="445.4" width="10.2" height="3.1" rx="0.8" fill="#6f8fc2" stroke="#4a6a9e" stroke-width="0.6"/><path d="M665.4 442.6 L674 451.6 M673.8 442.4 L665.2 451.8" stroke="#6a6a68" stroke-width="4.3" stroke-linecap="round"/><path d="M665.4 442.6 L674 451.6 M673.8 442.4 L665.2 451.8" stroke="#8e8e8c" stroke-width="2.2" stroke-linecap="round"/></svg>
</div></body></html>
